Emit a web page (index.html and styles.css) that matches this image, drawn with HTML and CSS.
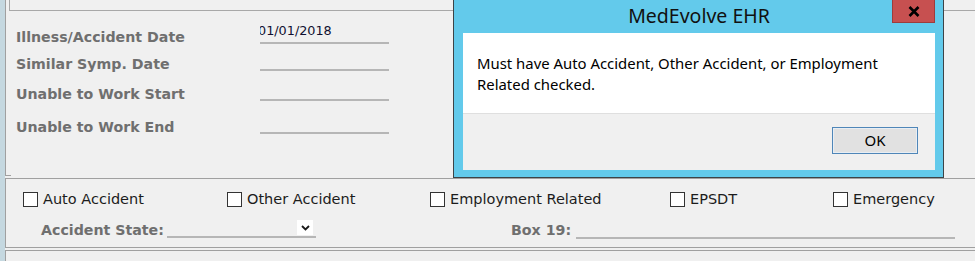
FILE: index.html
```html
<!DOCTYPE html>
<html>
<head>
<meta charset="utf-8">
<link rel="stylesheet" href="styles.css">
</head>
<body>
<div class="screen">
  <div class="strip"></div>
  <div class="main">
    <section class="upper">
      <div class="topbox"></div>
      <div class="dates">
        <div class="lbl">Illness/Accident Date</div>
        <div class="field"><span class="val">01/01/2018</span></div>
        <div class="lbl">Similar Symp. Date</div>
        <div class="field"></div>
        <div class="lbl">Unable to Work Start</div>
        <div class="field"></div>
        <div class="lbl">Unable to Work End</div>
        <div class="field"></div>
      </div>
      <div class="stub"></div>
    </section>
    <section class="checks">
      <div class="cbrow">
        <div class="cb"><span class="box"></span><span>Auto Accident</span></div>
        <div class="cb"><span class="box"></span><span>Other Accident</span></div>
        <div class="cb"><span class="box"></span><span>Employment Related</span></div>
        <div class="cb"><span class="box"></span><span>EPSDT</span></div>
        <div class="cb"><span class="box"></span><span>Emergency</span></div>
      </div>
      <div class="selrow">
        <span class="lbl state-lbl">Accident State:</span>
        <span class="select"><span class="dd"><svg width="9" height="6" viewBox="0 0 9 6"><polyline points="1,1 4.5,4.5 8,1" fill="none" stroke="#1a1a1a" stroke-width="1.8"/></svg></span></span>
        <span class="lbl box19-lbl">Box 19:</span>
        <span class="box19-line"></span>
      </div>
    </section>
    <section class="bottom"></section>
  </div>

  <div class="dialog">
    <div class="titlebar">
      <div class="title">MedEvolve EHR</div>
      <div class="close"><svg width="12" height="11" viewBox="0 0 12 11"><path d="M1.5 1 L10.5 10 M10.5 1 L1.5 10" stroke="#000" stroke-width="2.6" fill="none"/></svg></div>
    </div>
    <div class="message">Must have Auto Accident, Other Accident, or Employment<br>Related checked.</div>
    <div class="buttons"><div class="ok">OK</div></div>
  </div>
</div>
</body>
</html>
```
FILE: styles.css
```css
html, body {
  margin: 0;
  padding: 0;
  background: #f0f0f0;
}
.screen {
  position: relative;
  display: flex;
  width: 975px;
  height: 261px;
  overflow: hidden;
  background: #f0f0f0;
}
.strip {
  flex: none;
  width: 5px;
  background: #c5d8e0;
}
.main {
  flex: 1;
  display: flex;
  flex-direction: column;
  gap: 2px;
}
.upper {
  height: 176px;
  border-left: 1px solid #a0a0a0;
  display: flex;
  flex-direction: column;
}
.topbox {
  margin-left: 3px;
  height: 10px;
  border-left: 1px solid #a8a8a8;
  border-bottom: 1px solid #a8a8a8;
}
.dates {
  display: grid;
  grid-template-columns: 244px 129px;
  grid-template-rows: 33px 27px 30px 33px;
  padding-left: 10px;
}
.lbl {
  font-family: "DejaVu Sans", sans-serif;
  font-weight: bold;
  font-size: 14.2px;
  line-height: 15px;
  color: #6f6f6f;
  white-space: nowrap;
}
.dates .lbl {
  align-self: end;
  margin-bottom: -1px;
}
.field {
  align-self: end;
  height: 18px;
  border-bottom: 2px solid #b6b6b6;
  overflow: hidden;
}
.val {
  display: block;
  font-family: "DejaVu Sans", sans-serif;
  font-size: 12.8px;
  line-height: 14px;
  color: #101030;
  text-indent: -2px;
  white-space: nowrap;
}
.stub {
  margin-top: auto;
  width: 5px;
  height: 1px;
  background: #a0a0a0;
}
.checks {
  box-sizing: border-box;
  height: 70px;
  border-top: 1px solid #a0a0a0;
  border-left: 1px solid #a0a0a0;
  border-bottom: 1px solid #a0a0a0;
}
.cbrow {
  display: grid;
  grid-template-columns: 204px 203px 240px 163px auto;
  padding: 12px 0 0 17px;
}
.cb {
  display: flex;
  align-items: center;
  gap: 5px;
  font-family: "DejaVu Sans", sans-serif;
  font-size: 14.5px;
  line-height: 16px;
  color: #1c1c1c;
  white-space: nowrap;
}
.box {
  flex: none;
  box-sizing: border-box;
  width: 15px;
  height: 15px;
  border: 1px solid #333;
  background: #fff;
}
.selrow {
  display: flex;
  align-items: flex-start;
  margin-top: 15px;
}
.state-lbl {
  width: 126px;
  margin-left: 35px;
  line-height: 16px;
}
.select {
  box-sizing: border-box;
  width: 149px;
  height: 16px;
  border-bottom: 2px solid #b6b6b6;
  display: flex;
  justify-content: flex-end;
}
.dd {
  width: 16px;
  height: 15px;
  margin-top: -2px;
  margin-right: 3px;
  background: #fff;
  display: flex;
  align-items: center;
  justify-content: center;
}
.box19-lbl {
  width: 65px;
  margin-left: 195px;
  line-height: 16px;
}
.box19-line {
  box-sizing: border-box;
  width: 379px;
  height: 17px;
  border-bottom: 2px solid #b6b6b6;
}
.bottom {
  flex: 1;
  border-top: 1px solid #a0a0a0;
  border-left: 1px solid #a0a0a0;
}

/* dialog */
.dialog {
  position: absolute;
  left: 453px;
  top: 0;
  width: 491px;
  height: 178px;
  box-sizing: border-box;
  border: 1px solid #3d4447;
  border-top: none;
  background: #63caeb;
  padding: 0 8px 7px 9px;
  display: flex;
  flex-direction: column;
  font-family: "Noto Sans", sans-serif;
}
.titlebar {
  height: 33px;
  display: grid;
  grid-template-columns: 1fr auto 1fr;
}
.title {
  grid-column: 2;
  font-size: 19.5px;
  line-height: 31px;
  color: #111;
}
.close {
  grid-column: 3;
  justify-self: end;
  align-self: start;
  box-sizing: border-box;
  width: 43px;
  height: 23px;
  background: #c75050;
  border: 1px solid #9e3c3c;
  border-top: none;
  display: flex;
  align-items: center;
  justify-content: center;
}
.message {
  height: 80px;
  box-sizing: border-box;
  background: #fff;
  padding: 20px 14px 0;
  font-size: 14.9px;
  line-height: 21px;
  color: #000;
}
.buttons {
  flex: 1;
  background: #f0f0f0;
  border-top: 1px solid #dfdfdf;
  display: flex;
  justify-content: flex-end;
  align-items: flex-start;
  padding: 13px 17px 0 0;
}
.ok {
  box-sizing: border-box;
  width: 86px;
  height: 27px;
  background: #e1e1e1;
  border: 1px solid #4f86b8;
  box-shadow: inset 0 0 0 1px #e8eef4;
  font-size: 15px;
  line-height: 25px;
  text-align: center;
  color: #000;
}
```
